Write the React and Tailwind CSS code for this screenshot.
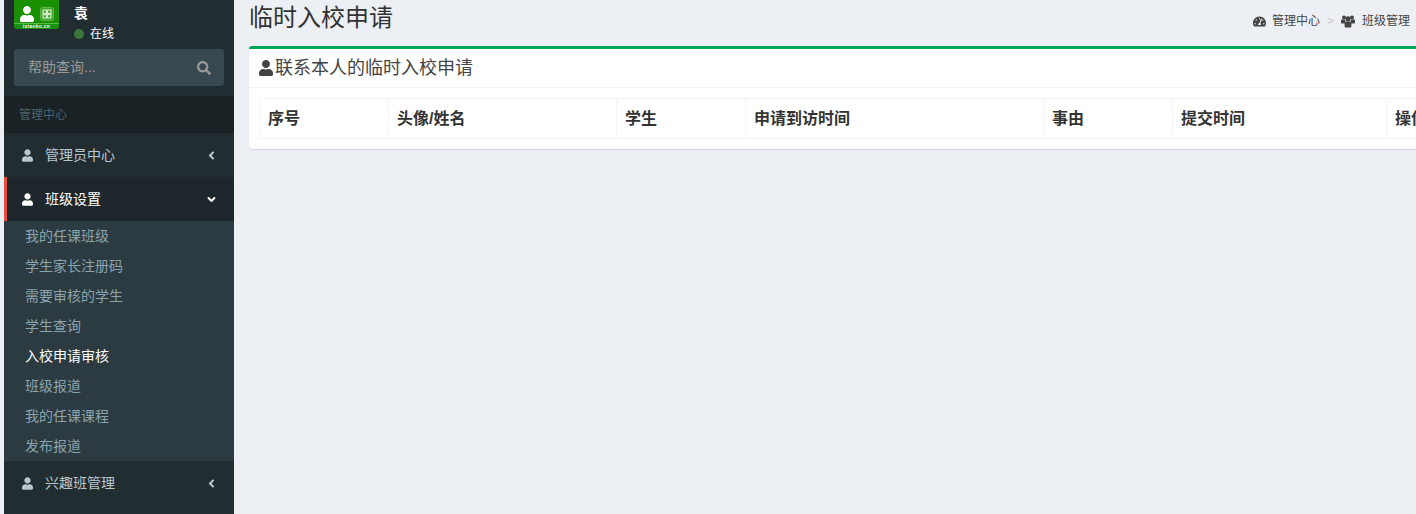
import { FaUser, FaSearch, FaAngleLeft, FaAngleDown, FaTachometerAlt } from 'react-icons/fa'

const font = { fontFamily: '"Liberation Sans", "Noto Sans CJK SC", sans-serif' }

const subItems = ['我的任课班级', '学生家长注册码', '需要审核的学生', '学生查询', '入校申请审核', '班级报道', '我的任课课程', '发布报道']

const columns = [
  { label: '序号', w: 'w-[128px]' },
  { label: '头像/姓名', w: 'w-[228px]' },
  { label: '学生', w: 'w-[129px]' },
  { label: '申请到访时间', w: 'w-[298px]' },
  { label: '事由', w: 'w-[129px]' },
  { label: '提交时间', w: 'w-[214px]' },
  { label: '操作', w: 'w-[80px]' },
]

// older font-awesome "users": taller and tighter than the one in react-icons
function UsersIcon() {
  return (
    <svg width="14" height="13" viewBox="0 0 14 13" fill="currentColor" className="mr-[7px] mt-[2px]">
      <circle cx="3" cy="2.6" r="2" />
      <circle cx="11" cy="2.6" r="2" />
      <path d="M0 5.6c0-.6.5-1 1-1h2.6l.6 1.2v2.8H1.2C.5 8.6 0 8.1 0 7.5zM14 5.6c0-.6-.5-1-1-1h-2.6l-.6 1.2v2.8h3c.7 0 1.2-.5 1.2-1.1z" />
      <circle cx="7" cy="3.8" r="2.6" />
      <path d="M3.6 8c0-1 .7-1.6 1.5-1.6h3.8c.8 0 1.5.6 1.5 1.6v3.2c0 .9-.7 1.4-1.5 1.4H5.1c-.8 0-1.5-.5-1.5-1.4z" />
    </svg>
  )
}

function Logo() {
  return (
    <div className="w-[45px] h-[29px] bg-[#199000] rounded-b-[3px] flex flex-col items-center shrink-0 overflow-hidden">
      <div className="flex items-center gap-[5px] h-[24px] pt-[3px]">
        <FaUser className="text-white text-[16px]" />
        <svg width="14" height="14" viewBox="0 0 14 14" fill="none">
          <rect x="0.5" y="0.5" width="13" height="13" rx="2" fill="#3fa52c" stroke="#5cb84a" />
          <rect x="3" y="3" width="3.4" height="3.4" fill="none" stroke="#e8f5e0" />
          <rect x="7.6" y="3" width="3.4" height="3.4" fill="none" stroke="#e8f5e0" />
          <rect x="3" y="7.6" width="3.4" height="3.4" fill="none" stroke="#e8f5e0" />
          <rect x="7.6" y="7.6" width="3.4" height="3.4" fill="none" stroke="#e8f5e0" />
        </svg>
      </div>
      <div className="w-full border-t border-[#5cb84a] text-center text-white text-[5px] leading-[5px] font-bold tracking-[0.3px] whitespace-nowrap -mt-px">ixiaoko.cn</div>
    </div>
  )
}

function MenuItem({ label, active, expanded }) {
  return (
    <div className={`h-[44px] flex items-center border-l-[3px] pl-[15px] pr-[16px] text-[14px] ${active ? 'bg-[#1e282c] border-[#e74c3c] text-white' : 'bg-[#222d32] border-transparent text-[#b8c7ce]'}`}>
      <FaUser className="text-[13px] w-[11px] shrink-0" />
      <span className="ml-[12px] flex-1">{label}</span>
      {expanded ? <FaAngleDown className="text-[13px]" /> : <FaAngleLeft className="text-[13px]" />}
    </div>
  )
}

function Sidebar() {
  return (
    <aside className="w-[230px] shrink-0 bg-[#222d32]">
      <div className="h-[49px] flex pl-[10px] gap-[15px]">
        <Logo />
        <div className="text-white">
          <div className="text-[14px] font-bold leading-[16px] pt-[5px]">袁</div>
          <div className="flex items-center text-[12px] leading-[16px] mt-[5px]">
            <span className="w-[10px] h-[10px] rounded-full bg-[#3c763d] mr-[6px]"></span>
            在线
          </div>
        </div>
      </div>
      <div className="h-[47px] px-[10px]">
        <div className="h-[37px] bg-[#374850] rounded-[3px] flex items-center justify-between pl-[14px] pr-[13px] text-[14px] text-[#999]">
          <span>帮助查询...</span>
          <FaSearch className="text-[14px]" />
        </div>
      </div>
      <div className="h-[37px] bg-[#1a2226] flex items-center pl-[15px] text-[12px] text-[#4b646f]">管理中心</div>
      <MenuItem label="管理员中心" />
      <MenuItem label="班级设置" active expanded />
      <div className="bg-[#2c3b41]">
        {subItems.map(item => (
          <div key={item} className={`h-[30px] flex items-center pl-[21px] pt-px text-[14px] ${item === '入校申请审核' ? 'text-white' : 'text-[#8aa4af]'}`}>{item}</div>
        ))}
      </div>
      <MenuItem label="兴趣班管理" />
    </aside>
  )
}

export default function App() {
  return (
    <div style={font} className="h-[514px] w-[1416px] overflow-hidden bg-[#ecf0f5] flex pl-[4px]">
      <Sidebar />
      <main className="flex-1 min-w-0">
        <div className="h-[46px] flex justify-between pl-[15px] pr-[6px] text-[#333]">
          <h1 className="text-[24px] leading-[36px]">临时入校申请</h1>
          <div className="flex items-start pt-[13px] text-[12px] leading-[16px] text-[#444]">
            <FaTachometerAlt className="text-[13px] mt-[2px] mr-[6px]" />
            <span>管理中心</span>
            <span className="mx-[7px] text-[#ccc]">&gt;</span>
            <UsersIcon />
            <span>班级管理</span>
          </div>
        </div>
        <section className="ml-[15px] w-[1250px] h-[103px] bg-white border-t-[3px] border-[#00a65a] rounded-[3px] shadow-[0_1px_1px_rgba(0,0,0,0.1)]">
          <div className="h-[39px] border-b border-[#f4f4f4] flex items-center pl-[10px] text-[18px] text-[#444]">
            <FaUser className="text-[16px] w-[14px] mr-[2px]" />
            <span>联系本人的临时入校申请</span>
          </div>
          <div className="p-[10px]">
            <div className="flex h-[41px] border border-[#f4f4f4] w-max">
              {columns.map((col, i) => (
                <div key={col.label} className={`${col.w} flex items-center pl-[8px] text-[16px] font-bold text-[#333] ${i > 0 ? 'border-l border-[#f4f4f4]' : ''}`}>{col.label}</div>
              ))}
            </div>
          </div>
        </section>
      </main>
    </div>
  )
}
